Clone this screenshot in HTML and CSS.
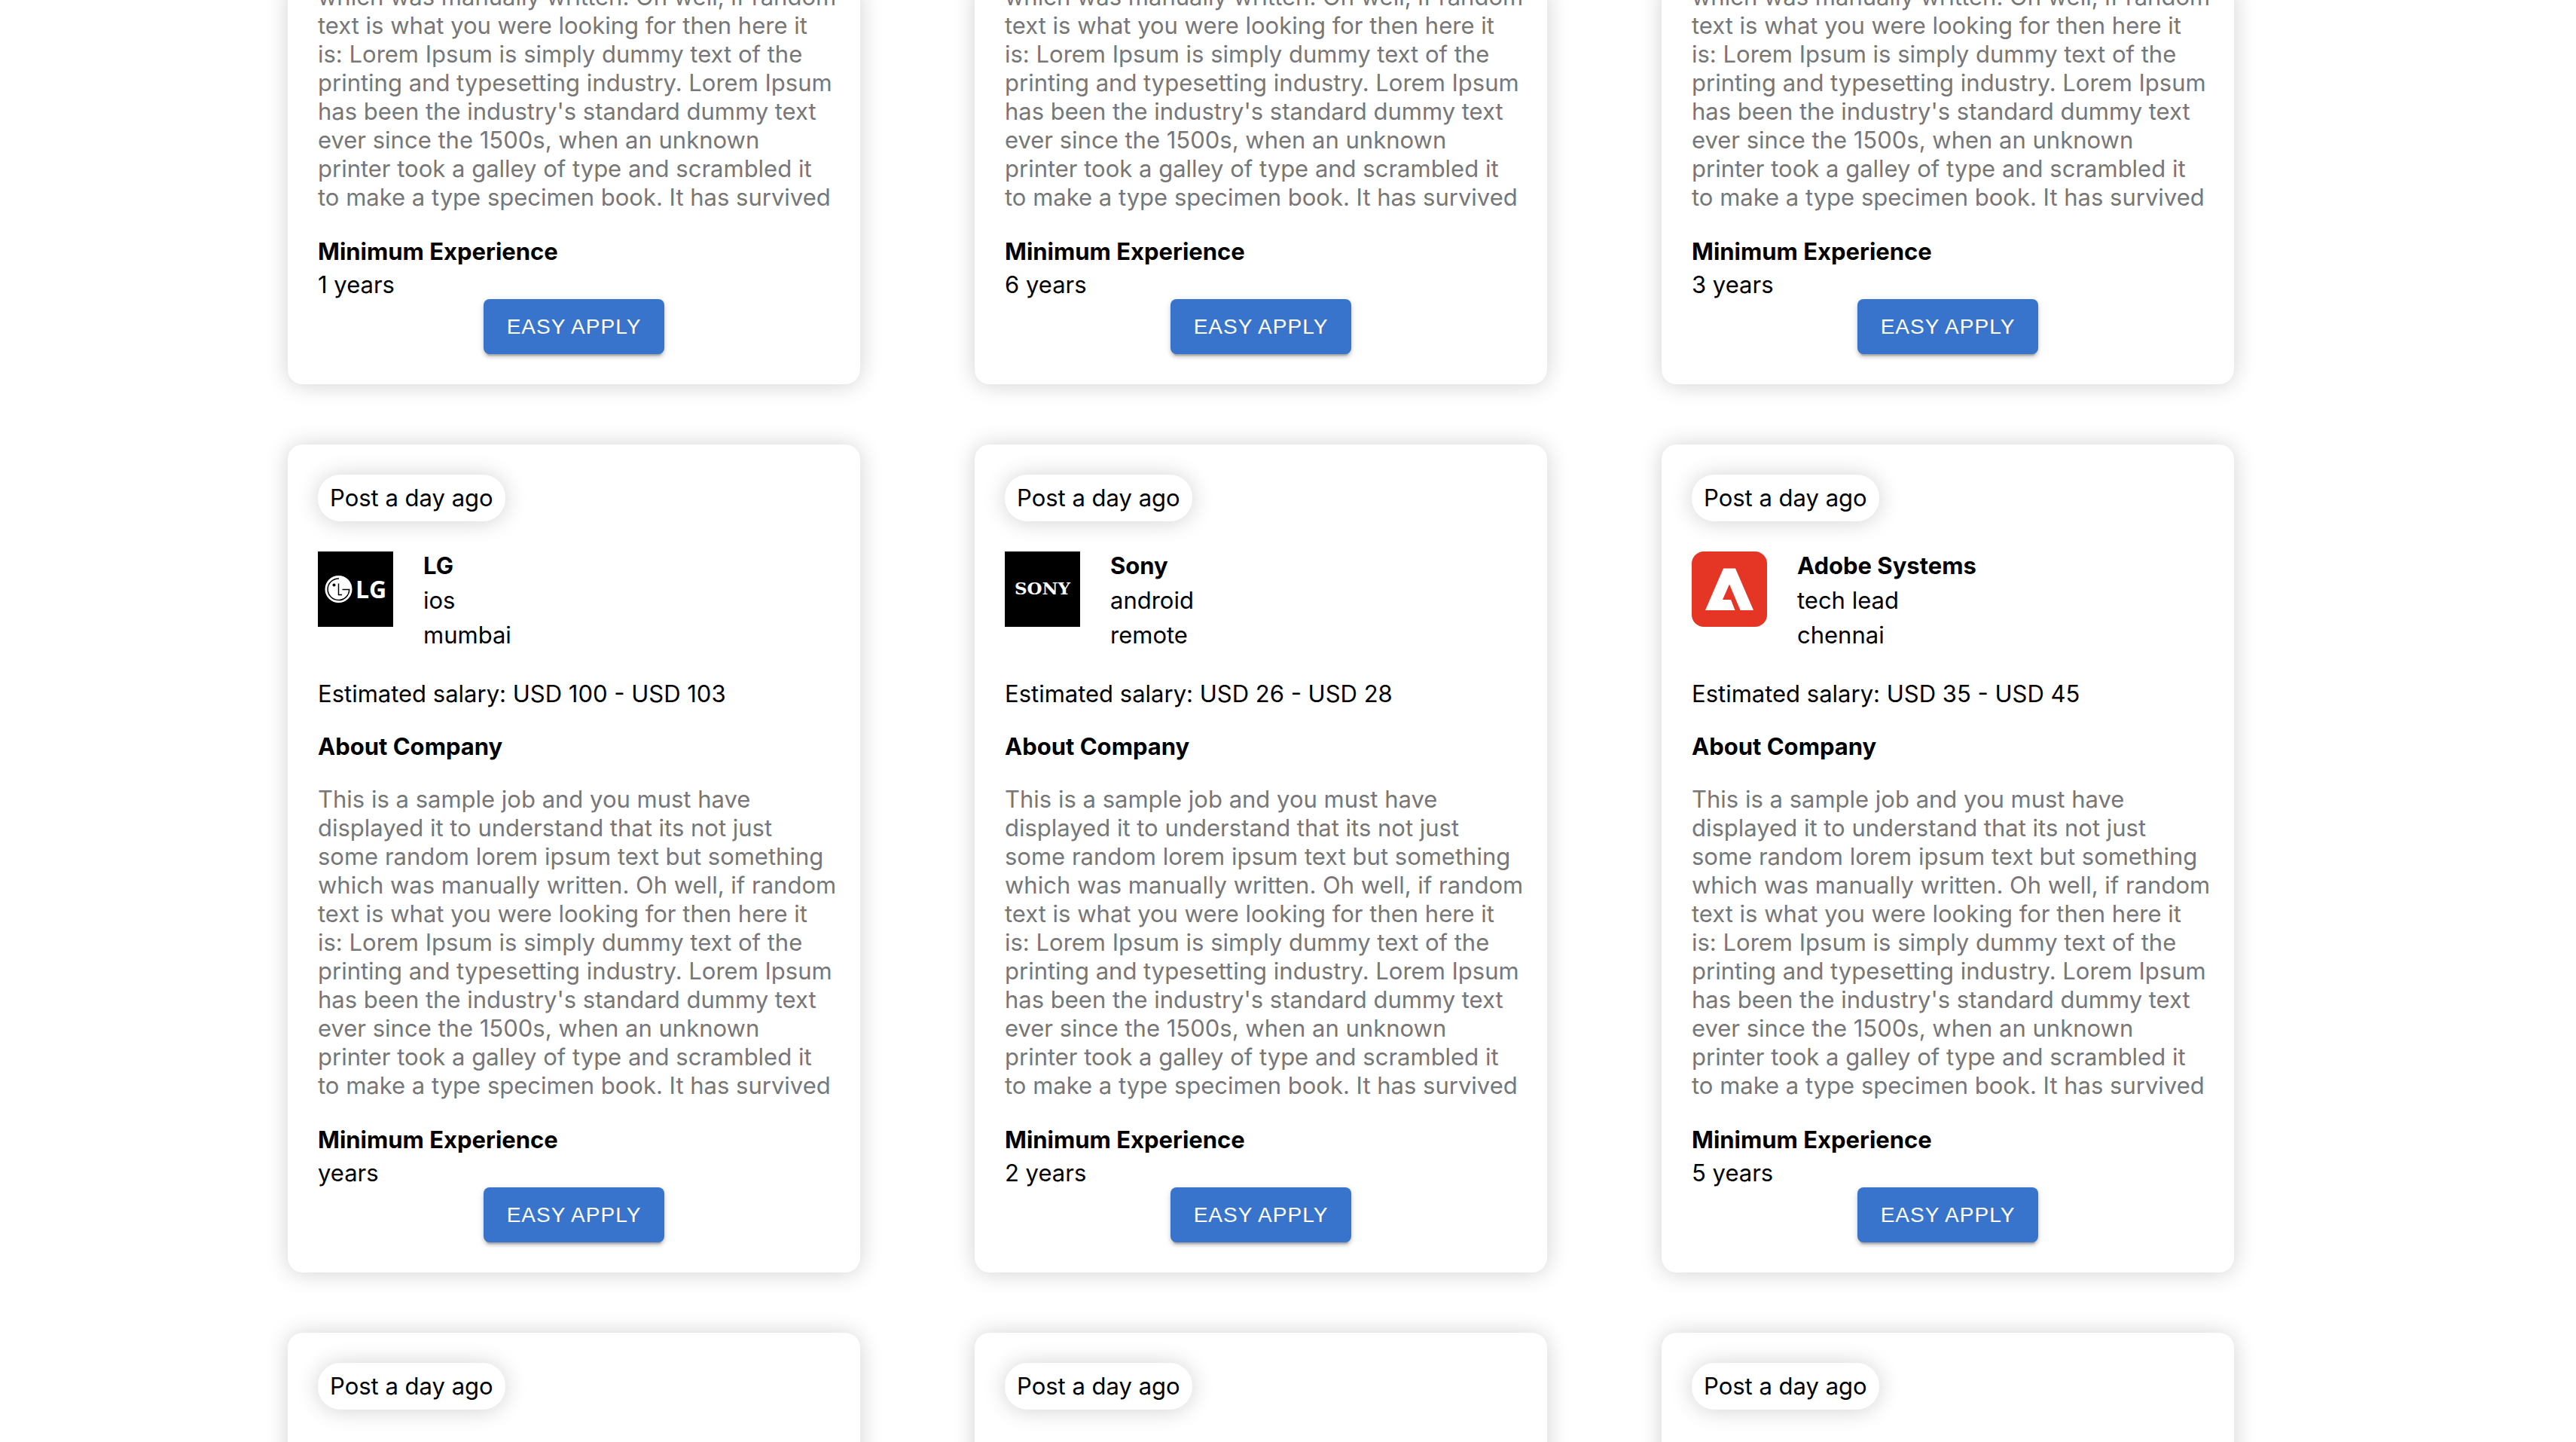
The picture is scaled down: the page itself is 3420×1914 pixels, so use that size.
FILE: index.html
```html
<!DOCTYPE html>
<html lang="en">
<head>
<meta charset="utf-8">
<meta name="viewport" content="width=device-width, initial-scale=1">
<title>Jobs</title>
<link rel="stylesheet" href="styles.css">
</head>
<body>
<main class="jobs" id="jobs"></main>
<template id="logo-lg">
<svg class="logo" viewBox="0 0 100 100" role="img" aria-label="LG">
<rect width="100" height="100" fill="#000"/>
<circle cx="27.5" cy="50" r="18" fill="#fff"/>
<path d="M28 36a14.300 14.300 0 1 0 13.700 14.500H32.500" fill="none" stroke="#000" stroke-width="1.500"/>
<path d="M27.500 42.500v15h4.500" fill="none" stroke="#000" stroke-width="1.500"/>
<circle cx="21.500" cy="44.500" r="2" fill="#000"/>
<text class="logo-lg-text" x="50" y="62">LG</text>
</svg>
</template>
<template id="logo-sony">
<svg class="logo" viewBox="0 0 100 100" role="img" aria-label="Sony">
<rect width="100" height="100" fill="#000"/>
<text class="logo-sony-text" x="50" y="57" text-anchor="middle">SONY</text>
</svg>
</template>
<template id="logo-adobe">
<svg class="logo" viewBox="0 0 100 100" role="img" aria-label="Adobe">
<rect width="100" height="100" rx="16" fill="#e53524"/>
<path d="M42 22.500H58L82 78H64.500L50 43.500 41 64H52L57.500 78H18z" fill="#fff"/>
</svg>
</template>
<script src="app.js"></script>
</body>
</html>
```
FILE: styles.css
```css
* {
  box-sizing: border-box;
}

body {
  margin: 0;
  height: 100vh;
  overflow: hidden;
  background: #fff;
  color: #000;
  font-family: Inter, "Liberation Sans", sans-serif;
  font-size: 31px;
  line-height: 38px;
}

.jobs {
  display: grid;
  grid-template-columns: repeat(3, 1fr);
  justify-items: center;
  row-gap: 80px;
  width: 80%;
  margin: -23px 0 0 306px;
}

.card {
  display: flex;
  flex-direction: column;
  width: 760px;
  padding: 40px;
  border-radius: 20px;
  background: #fff;
  box-shadow: 0 1px 30px rgba(0, 0, 0, 0.18);
}

.card-continued {
  padding-top: 0;
}

.card-next {
  min-height: 200px;
}

.posted {
  align-self: flex-start;
  margin-bottom: 40px;
  padding: 12px 16px;
  border-radius: 30px;
  box-shadow: 0 1px 30px rgba(0, 0, 0, 0.18);
}

.company {
  display: flex;
  gap: 40px;
  margin-bottom: 40px;
}

.logo {
  flex: none;
  width: 100px;
  height: 100px;
}

.logo-lg-text {
  fill: #fff;
  font: 700 32px "Open Sans", sans-serif;
}

.logo-sony-text {
  fill: #fff;
  font: 700 23px "DejaVu Serif", serif;
}

.company-info {
  display: flex;
  flex-direction: column;
  gap: 8px;
}

.label {
  margin: 0;
  font-size: 31px;
  font-weight: 700;
}

.text {
  margin: 0;
}

.salary {
  margin: 0 0 32px;
}

.description {
  margin: 0;
  color: #777;
  white-space: pre;
}

.about {
  margin-bottom: 32px;
}

.experience {
  display: flex;
  flex-direction: column;
  gap: 6px;
  margin-top: 34px;
}

.apply {
  align-self: center;
  height: 73px;
  padding: 0 31px;
  border: 0;
  border-radius: 8px;
  background: #3874cb;
  color: #fff;
  font: 28px/49px "Liberation Sans", Arial, sans-serif;
  letter-spacing: 1px;
  text-transform: uppercase;
  box-shadow: 0 6px 2px -4px rgba(0, 0, 0, 0.2), 0 4px 4px rgba(0, 0, 0, 0.14), 0 2px 10px rgba(0, 0, 0, 0.12);
}
```
FILE: app.js
```js
const description = [
  "This is a sample job and you must have",
  "displayed it to understand that its not just",
  "some random lorem ipsum text but something",
  "which was manually written. Oh well, if random",
  "text is what you were looking for then here it",
  "is: Lorem Ipsum is simply dummy text of the",
  "printing and typesetting industry. Lorem Ipsum",
  "has been the industry's standard dummy text",
  "ever since the 1500s, when an unknown",
  "printer took a galley of type and scrambled it",
  "to make a type specimen book. It has survived"
];

const jobs = [
  { experience: "1 years" },
  { experience: "6 years" },
  { experience: "3 years" },
  { name: "LG", logo: "lg", role: "ios", city: "mumbai", salary: "USD 100 - USD 103", experience: "years" },
  { name: "Sony", logo: "sony", role: "android", city: "remote", salary: "USD 26 - USD 28", experience: "2 years" },
  { name: "Adobe Systems", logo: "adobe", role: "tech lead", city: "chennai", salary: "USD 35 - USD 45", experience: "5 years" },
  {}, {}, {}
];

const posted = '<div class="posted">Post a day ago</div>';

const header = job => `${posted}
  <div class="company">
    ${document.getElementById("logo-" + job.logo).innerHTML}
    <div class="company-info">
      <h2 class="label">${job.name}</h2>
      <p class="text">${job.role}</p>
      <p class="text">${job.city}</p>
    </div>
  </div>
  <p class="salary">Estimated salary: ${job.salary}</p>
  <h3 class="label about">About Company</h3>`;

const footer = job => `
  <div class="experience">
    <h3 class="label">Minimum Experience</h3>
    <p class="text">${job.experience}</p>
  </div>
  <button class="apply" type="button">Easy Apply</button>`;

const card = job => {
  if (!job.experience) return `<article class="card card-next">${posted}</article>`;
  const lines = job.name ? description : description.slice(3);
  return `<article class="card${job.name ? "" : " card-continued"}">
    ${job.name ? header(job) : ""}
    <p class="description">${lines.join("\n")}</p>
    ${footer(job)}
  </article>`;
};

document.getElementById("jobs").innerHTML = jobs.map(card).join("");
```
